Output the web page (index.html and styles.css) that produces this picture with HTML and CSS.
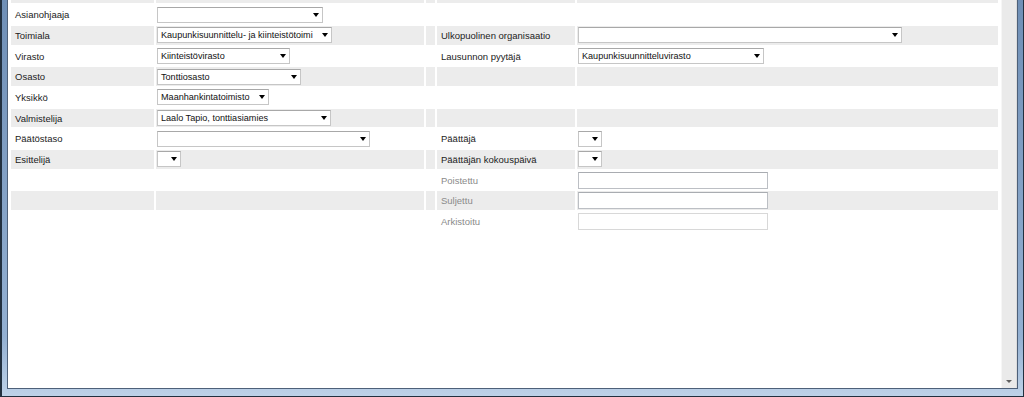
FILE: index.html
```html
<!DOCTYPE html>
<html lang="fi">
<head>
    <meta charset="UTF-8">
    <meta name="viewport" content="width=device-width, initial-scale=1.0">
    <title>Asian tiedot</title>
    <link rel="stylesheet" href="styles.css">
</head>
<body>
    <div class="window">
        <div class="client">
            <div class="content">
                <table class="form">
                    <colgroup>
                        <col class="col-label">
                        <col class="col-value">
                        <col class="col-spacer">
                        <col class="col-label2">
                        <col class="col-value2">
                    </colgroup>
                    <!-- row scrolled mostly out of view -->
                    <tr class="cut"><td></td><td></td><td></td><td></td><td></td></tr>
                    <tr>
                        <td class="label">Asianohjaaja</td>
                        <td class="value"><div class="select w166"><span class="select-text"></span><span class="arrow"></span></div></td>
                        <td></td><td></td><td></td>
                    </tr>
                    <tr>
                        <td class="label">Toimiala</td>
                        <td class="value"><div class="select w175"><span class="select-text">Kaupunkisuunnittelu- ja kiinteistötoimi</span><span class="arrow"></span></div></td>
                        <td></td>
                        <td class="label">Ulkopuolinen organisaatio</td>
                        <td class="value"><div class="select w324"><span class="select-text"></span><span class="arrow"></span></div></td>
                    </tr>
                    <tr>
                        <td class="label">Virasto</td>
                        <td class="value"><div class="select w133"><span class="select-text">Kiinteistövirasto</span><span class="arrow"></span></div></td>
                        <td></td>
                        <td class="label">Lausunnon pyytäjä</td>
                        <td class="value"><div class="select w186"><span class="select-text">Kaupunkisuunnitteluvirasto</span><span class="arrow"></span></div></td>
                    </tr>
                    <tr>
                        <td class="label">Osasto</td>
                        <td class="value"><div class="select w144"><span class="select-text">Tonttiosasto</span><span class="arrow"></span></div></td>
                        <td></td><td></td><td></td>
                    </tr>
                    <tr>
                        <td class="label">Yksikkö</td>
                        <td class="value"><div class="select w112"><span class="select-text">Maanhankintatoimisto</span><span class="arrow"></span></div></td>
                        <td></td><td></td><td></td>
                    </tr>
                    <tr>
                        <td class="label">Valmistelija</td>
                        <td class="value"><div class="select w174"><span class="select-text">Laalo Tapio, tonttiasiamies</span><span class="arrow"></span></div></td>
                        <td></td><td></td><td></td>
                    </tr>
                    <tr>
                        <td class="label">Päätöstaso</td>
                        <td class="value"><div class="select w213"><span class="select-text"></span><span class="arrow"></span></div></td>
                        <td></td>
                        <td class="label">Päättäjä</td>
                        <td class="value"><div class="select w24"><span class="select-text"></span><span class="arrow"></span></div></td>
                    </tr>
                    <tr>
                        <td class="label">Esittelijä</td>
                        <td class="value"><div class="select w24"><span class="select-text"></span><span class="arrow"></span></div></td>
                        <td></td>
                        <td class="label">Päättäjän kokouspäivä</td>
                        <td class="value"><div class="select w24"><span class="select-text"></span><span class="arrow"></span></div></td>
                    </tr>
                    <tr>
                        <td></td><td></td><td></td>
                        <td class="label muted">Poistettu</td>
                        <td class="value"><input class="textbox" type="text"></td>
                    </tr>
                    <tr>
                        <td></td><td></td><td></td>
                        <td class="label muted">Suljettu</td>
                        <td class="value"><input class="textbox" type="text"></td>
                    </tr>
                    <tr>
                        <td></td><td></td><td></td>
                        <td class="label muted">Arkistoitu</td>
                        <td class="value"><input class="textbox disabled" type="text" disabled></td>
                    </tr>
                </table>
            </div>
            <div class="scrollbar">
                <span class="scroll-down"></span>
            </div>
        </div>
    </div>
</body>
</html>
```

FILE: styles.css
```css
html, body {
    margin: 0;
    height: 100%;
    overflow: hidden;
}

body {
    font-family: "Liberation Sans", Arial, sans-serif;
    font-size: 9.5px;
    color: #222;
}

/* window frame */
.window {
    box-sizing: border-box;
    height: 397px;
    display: flex;
    padding: 0 5px 7px 5px;
    background: linear-gradient(to bottom, #6f8fb6, #93b0d2 85%, #bed2e8);
    border-left: 2px solid #22303f;
    border-right: 1px solid #22303f;
    border-bottom: 1px solid #22303f;
}

.client {
    flex: 1;
    min-width: 0;
    display: flex;
    background: #fff;
    border: 1px solid #4d6079;
    border-top: none;
}

.content {
    flex: 1;
    min-width: 0;
    overflow: hidden;
}

/* form table */
.form {
    table-layout: fixed;
    width: 991px;
    border-collapse: separate;
    border-spacing: 2px;
    margin: -17.4px 0 0 1px;
}

.col-label { width: 143px; }
.col-value { width: 268px; }
.col-spacer { width: 9px; }
.col-label2 { width: 138px; }
.col-value2 { width: 421px; }

.form td {
    height: 18.7px;
    padding: 0;
    vertical-align: middle;
    white-space: nowrap;
    overflow: hidden;
}

.form tr:nth-child(odd) td {
    background: #ececec;
}

.form .label {
    padding-left: 4px;
}

.form .value {
    padding-left: 1px;
}

.muted {
    color: #8a8a8a;
}

/* dropdowns */
.select {
    box-sizing: border-box;
    height: 16px;
    display: flex;
    align-items: center;
    justify-content: space-between;
    gap: 2px;
    padding: 0 3px 0 3px;
    background: #fff;
    border: 1px solid #c6c6c6;
    border-top-color: #a8a8a8;
    color: #111;
    font-size: 9.1px;
}

.select-text {
    white-space: nowrap;
}

.arrow {
    width: 0;
    height: 0;
    flex: none;
    border-left: 3.5px solid transparent;
    border-right: 3.5px solid transparent;
    border-top: 4px solid #000;
}

.w24 { width: 24px; }
.w112 { width: 112px; }
.w133 { width: 133px; }
.w144 { width: 144px; }
.w166 { width: 166px; }
.w174 { width: 174px; }
.w175 { width: 175px; }
.w186 { width: 186px; }
.w213 { width: 213px; }
.w324 { width: 324px; }

/* text boxes */
.textbox {
    box-sizing: border-box;
    display: block;
    width: 190px;
    height: 17px;
    margin: 0;
    padding: 0 3px;
    background: #fff;
    border: 1px solid #bcbfc4;
    border-top-color: #a9acb1;
    font: inherit;
}

.textbox.disabled {
    border-color: #d8d8d8;
}

/* vertical scrollbar */
.scrollbar {
    box-sizing: border-box;
    width: 16px;
    display: flex;
    flex-direction: column;
    justify-content: flex-end;
    align-items: center;
    padding-bottom: 5px;
    background: #eaeaea;
    border-left: 1px solid #f6f6f6;
    border-right: 1px solid #dcdcdc;
}

.scroll-down {
    width: 0;
    height: 0;
    border-left: 3px solid transparent;
    border-right: 3px solid transparent;
    border-top: 3px solid #606060;
}
```
